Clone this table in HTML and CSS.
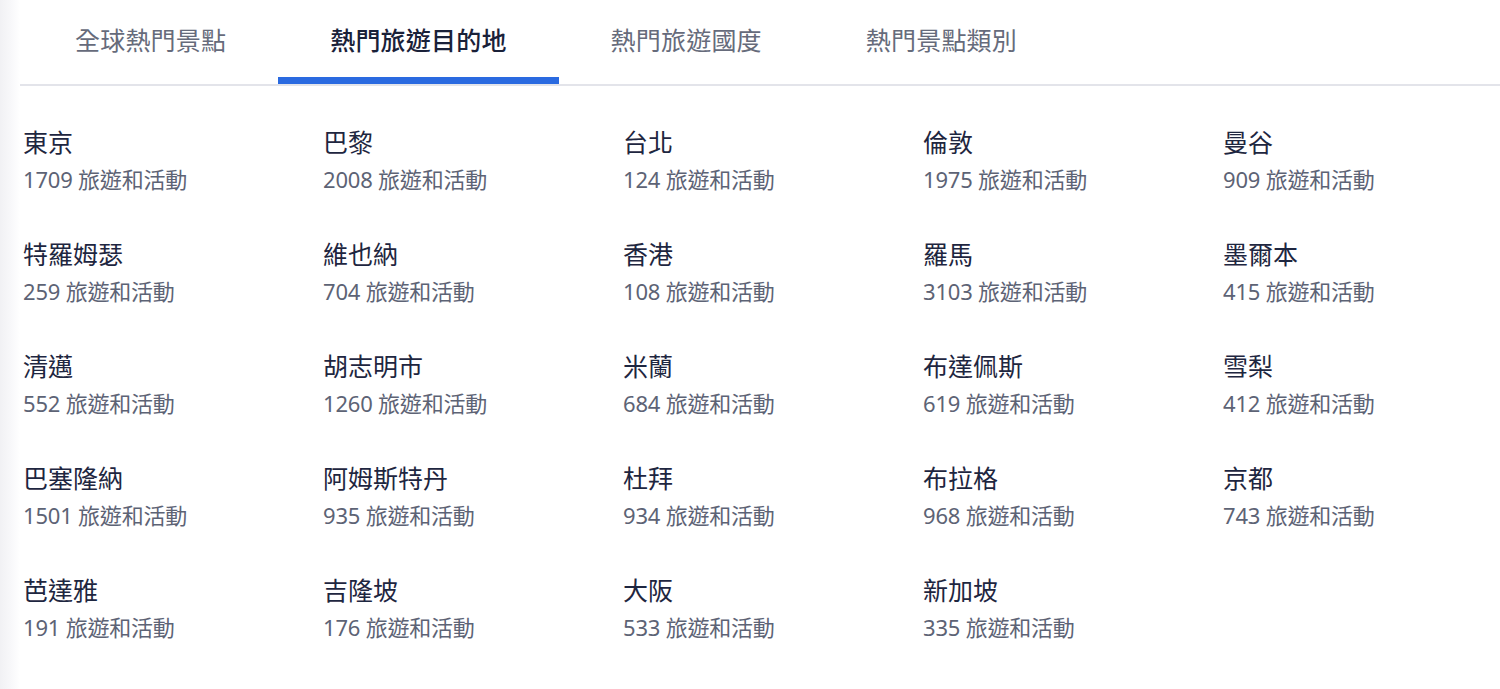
FILE: index.html
```html
<!DOCTYPE html>
<html lang="zh-Hant">
<head>
<meta charset="utf-8">
<title>熱門旅遊目的地</title>
<link rel="stylesheet" href="styles.css">
</head>
<body>
<div class="page">
  <div class="edge"></div>
  <main class="content">
    <nav class="tabs">
      <div class="tab">全球熱門景點</div>
      <div class="tab active">熱門旅遊目的地</div>
      <div class="tab">熱門旅遊國度</div>
      <div class="tab">熱門景點類別</div>
    </nav>
    <section class="grid">
      <div class="item"><div class="name">東京</div><div class="count">1709 旅遊和活動</div></div>
      <div class="item"><div class="name">巴黎</div><div class="count">2008 旅遊和活動</div></div>
      <div class="item"><div class="name">台北</div><div class="count">124 旅遊和活動</div></div>
      <div class="item"><div class="name">倫敦</div><div class="count">1975 旅遊和活動</div></div>
      <div class="item"><div class="name">曼谷</div><div class="count">909 旅遊和活動</div></div>

      <div class="item"><div class="name">特羅姆瑟</div><div class="count">259 旅遊和活動</div></div>
      <div class="item"><div class="name">維也納</div><div class="count">704 旅遊和活動</div></div>
      <div class="item"><div class="name">香港</div><div class="count">108 旅遊和活動</div></div>
      <div class="item"><div class="name">羅馬</div><div class="count">3103 旅遊和活動</div></div>
      <div class="item"><div class="name">墨爾本</div><div class="count">415 旅遊和活動</div></div>

      <div class="item"><div class="name">清邁</div><div class="count">552 旅遊和活動</div></div>
      <div class="item"><div class="name">胡志明市</div><div class="count">1260 旅遊和活動</div></div>
      <div class="item"><div class="name">米蘭</div><div class="count">684 旅遊和活動</div></div>
      <div class="item"><div class="name">布達佩斯</div><div class="count">619 旅遊和活動</div></div>
      <div class="item"><div class="name">雪梨</div><div class="count">412 旅遊和活動</div></div>

      <div class="item"><div class="name">巴塞隆納</div><div class="count">1501 旅遊和活動</div></div>
      <div class="item"><div class="name">阿姆斯特丹</div><div class="count">935 旅遊和活動</div></div>
      <div class="item"><div class="name">杜拜</div><div class="count">934 旅遊和活動</div></div>
      <div class="item"><div class="name">布拉格</div><div class="count">968 旅遊和活動</div></div>
      <div class="item"><div class="name">京都</div><div class="count">743 旅遊和活動</div></div>

      <div class="item"><div class="name">芭達雅</div><div class="count">191 旅遊和活動</div></div>
      <div class="item"><div class="name">吉隆坡</div><div class="count">176 旅遊和活動</div></div>
      <div class="item"><div class="name">大阪</div><div class="count">533 旅遊和活動</div></div>
      <div class="item"><div class="name">新加坡</div><div class="count">335 旅遊和活動</div></div>
    </section>
  </main>
</div>
</body>
</html>
```

FILE: styles.css
```css
html, body {
  margin: 0;
  padding: 0;
  background: #ffffff;
}

body {
  font-family: "Noto Sans", "Noto Sans CJK TC", sans-serif;
  color: #1e2640;
}

.page {
  display: flex;
  min-height: 689px;
}

.edge {
  flex: 0 0 20px;
  background: linear-gradient(to right, #f1f1f4 0%, #f8f8fa 55%, #ffffff 100%);
}

.content {
  flex: 1;
  margin-right: 2px;
}

.tabs {
  display: flex;
  padding-left: 3px;
  border-bottom: 2px solid #e3e4ea;
}

.tab {
  padding: 24px 52px 21px;
  line-height: 32px;
  font-size: 25px;
  letter-spacing: 0.2px;
  color: #666b7b;
  border-bottom: 7px solid transparent;
  white-space: nowrap;
}

.tab.active {
  color: #1a2139;
  font-weight: 500;
  border-bottom-color: #2a6ae0;
}

.grid {
  display: grid;
  grid-template-columns: repeat(5, 300px);
  row-gap: 44px;
  padding: 40px 0 0 3px;
}

.name {
  font-size: 25px;
  line-height: 32px;
  color: #1e2640;
}

.count {
  margin-top: 7px;
  font-size: 22px;
  line-height: 29px;
  letter-spacing: -0.2px;
  color: #5d6375;
}
```
